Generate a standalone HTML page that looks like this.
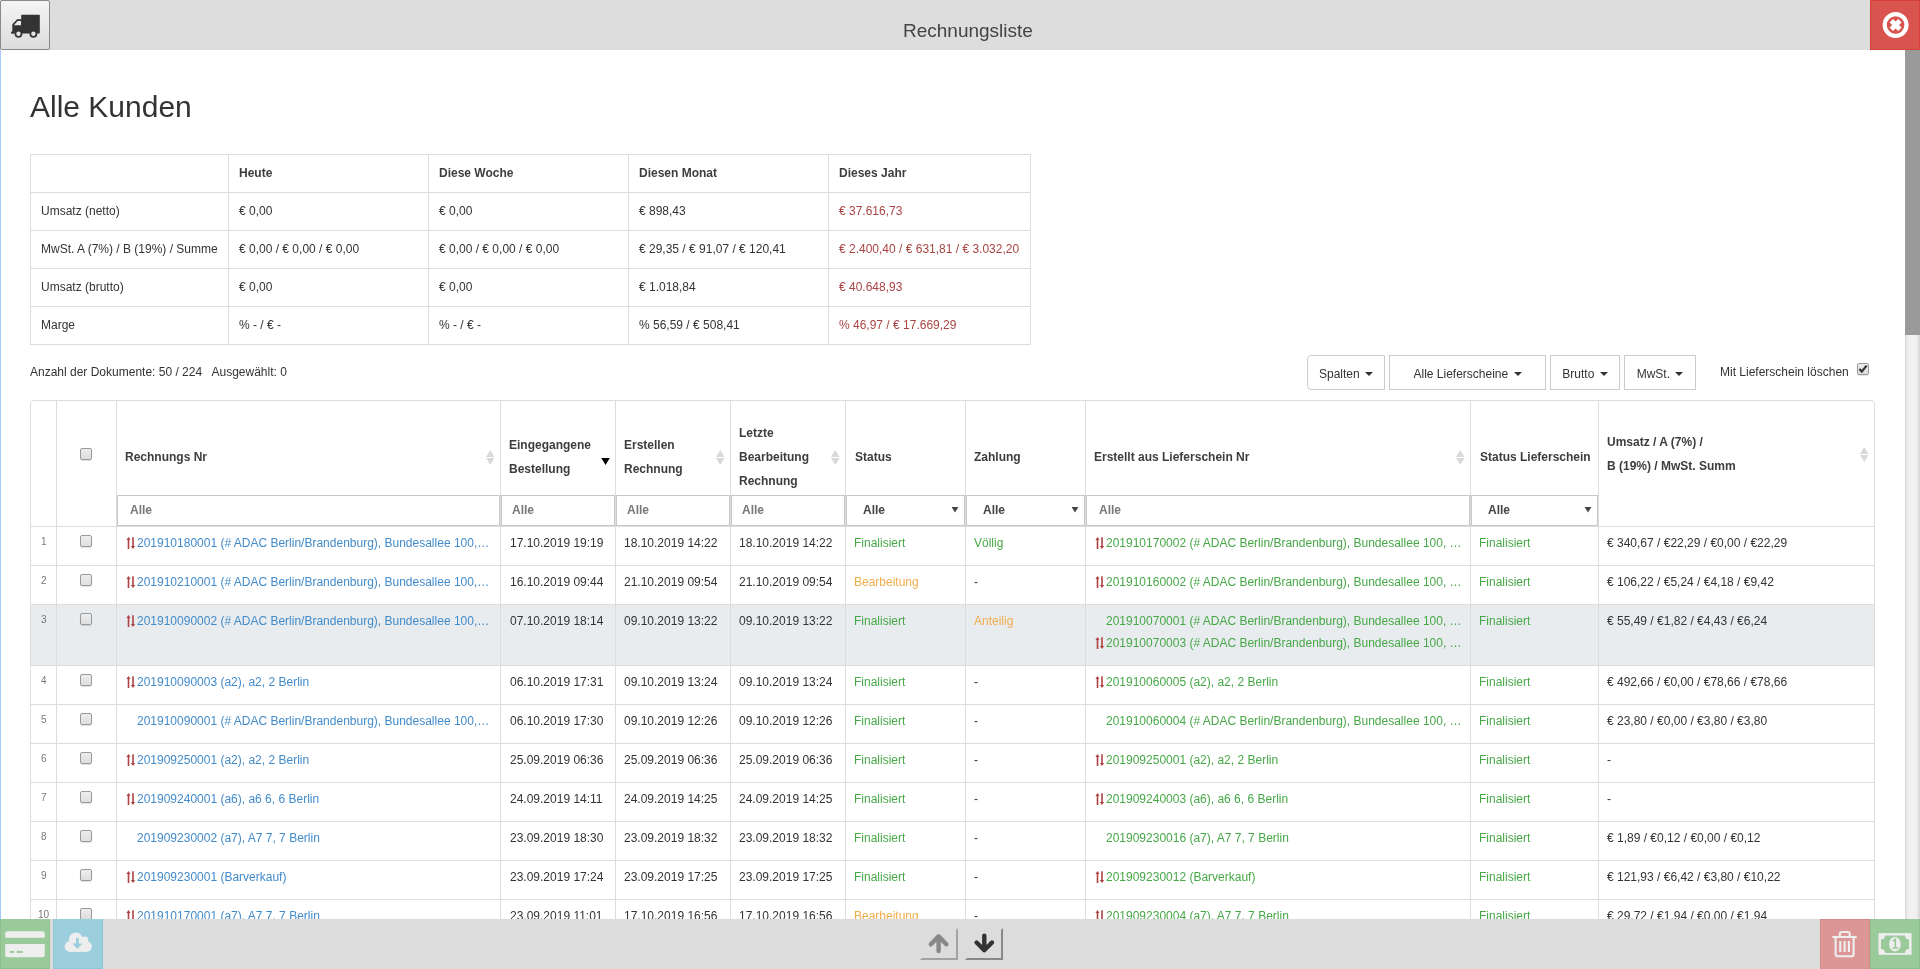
<!DOCTYPE html><html><head><meta charset="utf-8"><title>Rechnungsliste</title><style>
*{margin:0;padding:0;box-sizing:border-box}
html,body{width:1920px;height:969px;overflow:hidden;background:#fff}
#root{position:absolute;left:0;top:0;width:1920px;height:969px;will-change:transform}
body{-webkit-font-smoothing:antialiased;font-family:"Liberation Sans",sans-serif;font-size:12px;color:#333;position:relative}
.t{position:absolute;white-space:nowrap;line-height:14px}
.r{position:absolute}
.b{font-weight:bold;color:#3d3d3d}
.lk{color:#428bca}
.gr{color:#47a847}
.or{color:#f0ad4e}
.rd{color:#a94442}
.cb{position:absolute;width:12px;height:12px;border:1px solid #9a9a9a;border-radius:2px;background:linear-gradient(#ededed,#dedede);box-shadow:0 1px 1px rgba(0,0,0,.12)}
svg{position:absolute;overflow:visible}
</style></head><body><div id="root">
<div class="r" style="left:0px;top:0px;width:1920px;height:50px;background:#dddddd"></div>
<div class="r" style="left:0px;top:0px;width:50px;height:50px;background:linear-gradient(#f5f5f5,#dcdcdc);border:1px solid #8a8a8a;border-radius:2px"></div>
<svg style="left:0;top:0" width="50" height="50" viewBox="0 0 50 50">
<g fill="#333">
<rect x="21.2" y="14.8" width="18.6" height="18.6" rx="0.6"/>
<path d="M12.3 33.6 L12.3 24.2 L17.1 19.2 L22 19.2 L22 33.6 Z M13.9 25.3 L21.2 25.3 L21.2 20.9 L17.6 20.9 Z" fill-rule="evenodd"/>
<rect x="11" y="31.6" width="3" height="2.2" rx="1"/>
<circle cx="18.5" cy="33.8" r="3.9"/><circle cx="33.4" cy="33.8" r="3.9"/>
</g>
<circle cx="18.5" cy="33.8" r="2.2" fill="#e6e6e6"/><circle cx="33.4" cy="33.8" r="2.2" fill="#e6e6e6"/>
</svg>
<div class="t " style="left:903px;top:20px;font-size:19px;line-height:22px;color:#444">Rechnungsliste</div>
<div class="r" style="left:1870px;top:0px;width:50px;height:50px;background:#d9534f;border:1px solid #d43f3a"></div>
<svg style="left:1870px;top:0" width="50" height="50" viewBox="0 0 50 50">
<circle cx="25.6" cy="25" r="10.9" fill="none" stroke="#fff" stroke-width="4.2"/>
<path d="M25.60 28.39 L22.98 31.01 L19.59 27.62 L22.21 25.00 L19.59 22.38 L22.98 18.99 L25.60 21.61 L28.22 18.99 L31.61 22.38 L28.99 25.00 L31.61 27.62 L28.22 31.01 Z" fill="#fff"/>
</svg>
<div class="r" style="left:0px;top:50px;width:1px;height:869px;background:#a6c8ff"></div>
<div class="r" style="left:1905px;top:50px;width:15px;height:869px;background:linear-gradient(90deg,#d6d6d6 0,#e9e9e9 2px,#f1f1f1 5px,#f1f1f1 11px,#e0e0e0 14px,#d0d0d0 15px)"></div>
<div class="r" style="left:1905px;top:50px;width:15px;height:285px;background:#9a9a9a"></div>
<div class="t " style="left:30px;top:90px;font-size:30px;line-height:34px">Alle Kunden</div>
<div class="r" style="left:30px;top:154px;width:1px;height:191px;background:#dddddd"></div>
<div class="r" style="left:228px;top:154px;width:1px;height:191px;background:#dddddd"></div>
<div class="r" style="left:428px;top:154px;width:1px;height:191px;background:#dddddd"></div>
<div class="r" style="left:628px;top:154px;width:1px;height:191px;background:#dddddd"></div>
<div class="r" style="left:828px;top:154px;width:1px;height:191px;background:#dddddd"></div>
<div class="r" style="left:1030px;top:154px;width:1px;height:191px;background:#dddddd"></div>
<div class="r" style="left:30px;top:154px;width:1001px;height:1px;background:#dddddd"></div>
<div class="r" style="left:30px;top:192px;width:1001px;height:1px;background:#dddddd"></div>
<div class="r" style="left:30px;top:230px;width:1001px;height:1px;background:#dddddd"></div>
<div class="r" style="left:30px;top:268px;width:1001px;height:1px;background:#dddddd"></div>
<div class="r" style="left:30px;top:306px;width:1001px;height:1px;background:#dddddd"></div>
<div class="r" style="left:30px;top:344px;width:1001px;height:1px;background:#dddddd"></div>
<div class="t b" style="left:239px;top:166px;">Heute</div>
<div class="t b" style="left:439px;top:166px;">Diese Woche</div>
<div class="t b" style="left:639px;top:166px;">Diesen Monat</div>
<div class="t b" style="left:839px;top:166px;">Dieses Jahr</div>
<div class="t " style="left:41px;top:204px;">Umsatz (netto)</div>
<div class="t " style="left:239px;top:204px;">€ 0,00</div>
<div class="t " style="left:439px;top:204px;">€ 0,00</div>
<div class="t " style="left:639px;top:204px;">€ 898,43</div>
<div class="t rd" style="left:839px;top:204px;">€ 37.616,73</div>
<div class="t " style="left:41px;top:242px;">MwSt. A (7%) / B (19%) / Summe</div>
<div class="t " style="left:239px;top:242px;">€ 0,00 / € 0,00 / € 0,00</div>
<div class="t " style="left:439px;top:242px;">€ 0,00 / € 0,00 / € 0,00</div>
<div class="t " style="left:639px;top:242px;">€ 29,35 / € 91,07 / € 120,41</div>
<div class="t rd" style="left:839px;top:242px;">€ 2.400,40 / € 631,81 / € 3.032,20</div>
<div class="t " style="left:41px;top:280px;">Umsatz (brutto)</div>
<div class="t " style="left:239px;top:280px;">€ 0,00</div>
<div class="t " style="left:439px;top:280px;">€ 0,00</div>
<div class="t " style="left:639px;top:280px;">€ 1.018,84</div>
<div class="t rd" style="left:839px;top:280px;">€ 40.648,93</div>
<div class="t " style="left:41px;top:318px;">Marge</div>
<div class="t " style="left:239px;top:318px;">% - / € -</div>
<div class="t " style="left:439px;top:318px;">% - / € -</div>
<div class="t " style="left:639px;top:318px;">% 56,59 / € 508,41</div>
<div class="t rd" style="left:839px;top:318px;">% 46,97 / € 17.669,29</div>
<div class="t " style="left:30px;top:365px;">Anzahl der Dokumente: 50 / 224 &nbsp; Ausgewählt: 0</div>
<div class="r" style="left:1307px;top:355px;width:78px;height:35px;border:1px solid #cccccc;background:#fff;border-radius:4px 0 0 4px"></div>
<div class="t" style="left:1307px;top:367px;width:78px;text-align:center">Spalten <span style="display:inline-block;width:0;height:0;border-left:4px solid transparent;border-right:4px solid transparent;border-top:4px solid #333;vertical-align:middle;margin-left:2px;margin-top:-2px"></span></div>
<div class="r" style="left:1389px;top:355px;width:157px;height:35px;border:1px solid #cccccc;background:#fff;"></div>
<div class="t" style="left:1389px;top:367px;width:157px;text-align:center">Alle Lieferscheine <span style="display:inline-block;width:0;height:0;border-left:4px solid transparent;border-right:4px solid transparent;border-top:4px solid #333;vertical-align:middle;margin-left:2px;margin-top:-2px"></span></div>
<div class="r" style="left:1550px;top:355px;width:70px;height:35px;border:1px solid #cccccc;background:#fff;"></div>
<div class="t" style="left:1550px;top:367px;width:70px;text-align:center">Brutto <span style="display:inline-block;width:0;height:0;border-left:4px solid transparent;border-right:4px solid transparent;border-top:4px solid #333;vertical-align:middle;margin-left:2px;margin-top:-2px"></span></div>
<div class="r" style="left:1624px;top:355px;width:72px;height:35px;border:1px solid #cccccc;background:#fff;"></div>
<div class="t" style="left:1624px;top:367px;width:72px;text-align:center">MwSt. <span style="display:inline-block;width:0;height:0;border-left:4px solid transparent;border-right:4px solid transparent;border-top:4px solid #333;vertical-align:middle;margin-left:2px;margin-top:-2px"></span></div>
<div class="t " style="left:1720px;top:365px;">Mit Lieferschein löschen</div>
<div class="cb" style="left:1857px;top:363px"></div>
<svg style="left:1857px;top:363px" width="12" height="12" viewBox="0 0 12 12"><path d="M2.4 6 L4.8 8.6 L9.6 2.6" fill="none" stroke="#333" stroke-width="2.3"/></svg>
<div class="r" style="left:31px;top:605px;width:1843px;height:60px;background:#e9ecef"></div>
<div class="r" style="left:30px;top:400px;width:1845px;height:579px;border:1px solid #dddddd;border-radius:4px 4px 0 0"></div>
<div class="r" style="left:56px;top:400px;width:1px;height:569px;background:#dddddd"></div>
<div class="r" style="left:116px;top:400px;width:1px;height:569px;background:#dddddd"></div>
<div class="r" style="left:500px;top:400px;width:1px;height:569px;background:#dddddd"></div>
<div class="r" style="left:615px;top:400px;width:1px;height:569px;background:#dddddd"></div>
<div class="r" style="left:730px;top:400px;width:1px;height:569px;background:#dddddd"></div>
<div class="r" style="left:845px;top:400px;width:1px;height:569px;background:#dddddd"></div>
<div class="r" style="left:965px;top:400px;width:1px;height:569px;background:#dddddd"></div>
<div class="r" style="left:1085px;top:400px;width:1px;height:569px;background:#dddddd"></div>
<div class="r" style="left:1470px;top:400px;width:1px;height:569px;background:#dddddd"></div>
<div class="r" style="left:1598px;top:400px;width:1px;height:569px;background:#dddddd"></div>
<div class="r" style="left:30px;top:526px;width:1845px;height:1px;background:#dddddd"></div>
<div class="r" style="left:30px;top:565px;width:1845px;height:1px;background:#dddddd"></div>
<div class="r" style="left:30px;top:604px;width:1845px;height:1px;background:#dddddd"></div>
<div class="r" style="left:30px;top:665px;width:1845px;height:1px;background:#dddddd"></div>
<div class="r" style="left:30px;top:704px;width:1845px;height:1px;background:#dddddd"></div>
<div class="r" style="left:30px;top:743px;width:1845px;height:1px;background:#dddddd"></div>
<div class="r" style="left:30px;top:782px;width:1845px;height:1px;background:#dddddd"></div>
<div class="r" style="left:30px;top:821px;width:1845px;height:1px;background:#dddddd"></div>
<div class="r" style="left:30px;top:860px;width:1845px;height:1px;background:#dddddd"></div>
<div class="r" style="left:30px;top:899px;width:1845px;height:1px;background:#dddddd"></div>
<div class="r" style="left:30px;top:938px;width:1845px;height:1px;background:#dddddd"></div>
<div class="r" style="left:116px;top:495px;width:1482px;height:1px;background:#dddddd"></div>
<div class="t b" style="left:125px;top:450px;">Rechnungs Nr</div>
<div class="t b" style="left:509px;top:438px;">Eingegangene</div>
<div class="t b" style="left:509px;top:462px;">Bestellung</div>
<div class="t b" style="left:624px;top:438px;">Erstellen</div>
<div class="t b" style="left:624px;top:462px;">Rechnung</div>
<div class="t b" style="left:739px;top:426px;">Letzte</div>
<div class="t b" style="left:739px;top:450px;">Bearbeitung</div>
<div class="t b" style="left:739px;top:474px;">Rechnung</div>
<div class="t b" style="left:855px;top:450px;">Status</div>
<div class="t b" style="left:974px;top:450px;">Zahlung</div>
<div class="t b" style="left:1094px;top:450px;">Erstellt aus Lieferschein Nr</div>
<div class="t b" style="left:1480px;top:450px;">Status Lieferschein</div>
<div class="t b" style="left:1607px;top:435px;">Umsatz / A (7%) /</div>
<div class="t b" style="left:1607px;top:459px;">B (19%) / MwSt. Summ</div>
<div class="cb" style="left:80px;top:448px"></div>
<svg style="left:486.25px;top:450px" width="9" height="15" viewBox="0 0 9 15"><path d="M4.25 0 L8.5 7 L0 7 Z M0 8 L8.5 8 L4.25 15 Z" fill="#d9d9d9"/></svg>
<svg style="left:716.25px;top:450px" width="9" height="15" viewBox="0 0 9 15"><path d="M4.25 0 L8.5 7 L0 7 Z M0 8 L8.5 8 L4.25 15 Z" fill="#d9d9d9"/></svg>
<svg style="left:831.25px;top:450px" width="9" height="15" viewBox="0 0 9 15"><path d="M4.25 0 L8.5 7 L0 7 Z M0 8 L8.5 8 L4.25 15 Z" fill="#d9d9d9"/></svg>
<svg style="left:1456.25px;top:450px" width="9" height="15" viewBox="0 0 9 15"><path d="M4.25 0 L8.5 7 L0 7 Z M0 8 L8.5 8 L4.25 15 Z" fill="#d9d9d9"/></svg>
<svg style="left:1860.25px;top:447px" width="9" height="15" viewBox="0 0 9 15"><path d="M4.25 0 L8.5 7 L0 7 Z M0 8 L8.5 8 L4.25 15 Z" fill="#d9d9d9"/></svg>
<svg style="left:600px;top:457px" width="11" height="10" viewBox="0 0 11 10"><path d="M1.3 1 L9.8 1 L5.55 8 Z" fill="#000"/></svg>
<div class="r" style="left:117px;top:495px;width:383px;height:31px;border:1px solid #c8c8c8;background:#fff"></div>
<div class="t b" style="left:130px;top:503px;color:#777">Alle</div>
<div class="r" style="left:501px;top:495px;width:114px;height:31px;border:1px solid #c8c8c8;background:#fff"></div>
<div class="t b" style="left:512px;top:503px;color:#777">Alle</div>
<div class="r" style="left:616px;top:495px;width:114px;height:31px;border:1px solid #c8c8c8;background:#fff"></div>
<div class="t b" style="left:627px;top:503px;color:#777">Alle</div>
<div class="r" style="left:731px;top:495px;width:114px;height:31px;border:1px solid #c8c8c8;background:#fff"></div>
<div class="t b" style="left:742px;top:503px;color:#777">Alle</div>
<div class="r" style="left:846px;top:495px;width:119px;height:31px;border:1px solid #c8c8c8;background:#fff"></div>
<div class="t b" style="left:863px;top:503px;color:#444">Alle</div>
<svg style="left:951px;top:507px" width="8" height="7" viewBox="0 0 8 7"><path d="M0.6 0 L7.4 0 L4 5.6 Z" fill="#444"/></svg>
<div class="r" style="left:966px;top:495px;width:119px;height:31px;border:1px solid #c8c8c8;background:#fff"></div>
<div class="t b" style="left:983px;top:503px;color:#444">Alle</div>
<svg style="left:1071px;top:507px" width="8" height="7" viewBox="0 0 8 7"><path d="M0.6 0 L7.4 0 L4 5.6 Z" fill="#444"/></svg>
<div class="r" style="left:1086px;top:495px;width:384px;height:31px;border:1px solid #c8c8c8;background:#fff"></div>
<div class="t b" style="left:1099px;top:503px;color:#777">Alle</div>
<div class="r" style="left:1471px;top:495px;width:127px;height:31px;border:1px solid #c8c8c8;background:#fff"></div>
<div class="t b" style="left:1488px;top:503px;color:#444">Alle</div>
<svg style="left:1584px;top:507px" width="8" height="7" viewBox="0 0 8 7"><path d="M0.6 0 L7.4 0 L4 5.6 Z" fill="#444"/></svg>
<div class="t " style="left:41px;top:535px;font-size:10px;color:#777">1</div>
<div class="cb" style="left:80px;top:535px"></div>
<svg style="left:126px;top:537px" width="10" height="13" viewBox="0 0 10 13"><g fill="#ad4444"><path d="M2.5 0.1 L4.6 3.0 L3.3 3.0 L3.3 12 L1.7 12 L1.7 3.0 L0.4 3.0 Z"/><path d="M7 12 L9.2 9 L7.8 9 L7.8 0.3 L6.2 0.3 L6.2 9 L4.8 9 Z"/></g></svg>
<div class="t lk" style="left:137px;top:536px;">201910180001 (# ADAC Berlin/Brandenburg), Bundesallee 100,…</div>
<div class="t " style="left:510px;top:536px;">17.10.2019 19:19</div>
<div class="t " style="left:624px;top:536px;">18.10.2019 14:22</div>
<div class="t " style="left:739px;top:536px;">18.10.2019 14:22</div>
<div class="t gr" style="left:854px;top:536px;">Finalisiert</div>
<div class="t gr" style="left:974px;top:536px;">Völlig</div>
<svg style="left:1095px;top:537px" width="10" height="13" viewBox="0 0 10 13"><g fill="#ad4444"><path d="M2.5 0.1 L4.6 3.0 L3.3 3.0 L3.3 12 L1.7 12 L1.7 3.0 L0.4 3.0 Z"/><path d="M7 12 L9.2 9 L7.8 9 L7.8 0.3 L6.2 0.3 L6.2 9 L4.8 9 Z"/></g></svg>
<div class="t gr" style="left:1106px;top:536px;">201910170002 (# ADAC Berlin/Brandenburg), Bundesallee 100, …</div>
<div class="t gr" style="left:1479px;top:536px;">Finalisiert</div>
<div class="t " style="left:1607px;top:536px;">€ 340,67 / €22,29 / €0,00 / €22,29</div>
<div class="t " style="left:41px;top:574px;font-size:10px;color:#777">2</div>
<div class="cb" style="left:80px;top:574px"></div>
<svg style="left:126px;top:576px" width="10" height="13" viewBox="0 0 10 13"><g fill="#ad4444"><path d="M2.5 0.1 L4.6 3.0 L3.3 3.0 L3.3 12 L1.7 12 L1.7 3.0 L0.4 3.0 Z"/><path d="M7 12 L9.2 9 L7.8 9 L7.8 0.3 L6.2 0.3 L6.2 9 L4.8 9 Z"/></g></svg>
<div class="t lk" style="left:137px;top:575px;">201910210001 (# ADAC Berlin/Brandenburg), Bundesallee 100,…</div>
<div class="t " style="left:510px;top:575px;">16.10.2019 09:44</div>
<div class="t " style="left:624px;top:575px;">21.10.2019 09:54</div>
<div class="t " style="left:739px;top:575px;">21.10.2019 09:54</div>
<div class="t or" style="left:854px;top:575px;">Bearbeitung</div>
<div class="t " style="left:974px;top:575px;">-</div>
<svg style="left:1095px;top:576px" width="10" height="13" viewBox="0 0 10 13"><g fill="#ad4444"><path d="M2.5 0.1 L4.6 3.0 L3.3 3.0 L3.3 12 L1.7 12 L1.7 3.0 L0.4 3.0 Z"/><path d="M7 12 L9.2 9 L7.8 9 L7.8 0.3 L6.2 0.3 L6.2 9 L4.8 9 Z"/></g></svg>
<div class="t gr" style="left:1106px;top:575px;">201910160002 (# ADAC Berlin/Brandenburg), Bundesallee 100, …</div>
<div class="t gr" style="left:1479px;top:575px;">Finalisiert</div>
<div class="t " style="left:1607px;top:575px;">€ 106,22 / €5,24 / €4,18 / €9,42</div>
<div class="t " style="left:41px;top:613px;font-size:10px;color:#777">3</div>
<div class="cb" style="left:80px;top:613px"></div>
<svg style="left:126px;top:615px" width="10" height="13" viewBox="0 0 10 13"><g fill="#ad4444"><path d="M2.5 0.1 L4.6 3.0 L3.3 3.0 L3.3 12 L1.7 12 L1.7 3.0 L0.4 3.0 Z"/><path d="M7 12 L9.2 9 L7.8 9 L7.8 0.3 L6.2 0.3 L6.2 9 L4.8 9 Z"/></g></svg>
<div class="t lk" style="left:137px;top:614px;">201910090002 (# ADAC Berlin/Brandenburg), Bundesallee 100,…</div>
<div class="t " style="left:510px;top:614px;">07.10.2019 18:14</div>
<div class="t " style="left:624px;top:614px;">09.10.2019 13:22</div>
<div class="t " style="left:739px;top:614px;">09.10.2019 13:22</div>
<div class="t gr" style="left:854px;top:614px;">Finalisiert</div>
<div class="t or" style="left:974px;top:614px;">Anteilig</div>
<div class="t gr" style="left:1106px;top:614px;">201910070001 (# ADAC Berlin/Brandenburg), Bundesallee 100, …</div>
<svg style="left:1095px;top:637px" width="10" height="13" viewBox="0 0 10 13"><g fill="#ad4444"><path d="M2.5 0.1 L4.6 3.0 L3.3 3.0 L3.3 12 L1.7 12 L1.7 3.0 L0.4 3.0 Z"/><path d="M7 12 L9.2 9 L7.8 9 L7.8 0.3 L6.2 0.3 L6.2 9 L4.8 9 Z"/></g></svg>
<div class="t gr" style="left:1106px;top:636px;">201910070003 (# ADAC Berlin/Brandenburg), Bundesallee 100, …</div>
<div class="t gr" style="left:1479px;top:614px;">Finalisiert</div>
<div class="t " style="left:1607px;top:614px;">€ 55,49 / €1,82 / €4,43 / €6,24</div>
<div class="t " style="left:41px;top:674px;font-size:10px;color:#777">4</div>
<div class="cb" style="left:80px;top:674px"></div>
<svg style="left:126px;top:676px" width="10" height="13" viewBox="0 0 10 13"><g fill="#ad4444"><path d="M2.5 0.1 L4.6 3.0 L3.3 3.0 L3.3 12 L1.7 12 L1.7 3.0 L0.4 3.0 Z"/><path d="M7 12 L9.2 9 L7.8 9 L7.8 0.3 L6.2 0.3 L6.2 9 L4.8 9 Z"/></g></svg>
<div class="t lk" style="left:137px;top:675px;">201910090003 (a2), a2, 2 Berlin</div>
<div class="t " style="left:510px;top:675px;">06.10.2019 17:31</div>
<div class="t " style="left:624px;top:675px;">09.10.2019 13:24</div>
<div class="t " style="left:739px;top:675px;">09.10.2019 13:24</div>
<div class="t gr" style="left:854px;top:675px;">Finalisiert</div>
<div class="t " style="left:974px;top:675px;">-</div>
<svg style="left:1095px;top:676px" width="10" height="13" viewBox="0 0 10 13"><g fill="#ad4444"><path d="M2.5 0.1 L4.6 3.0 L3.3 3.0 L3.3 12 L1.7 12 L1.7 3.0 L0.4 3.0 Z"/><path d="M7 12 L9.2 9 L7.8 9 L7.8 0.3 L6.2 0.3 L6.2 9 L4.8 9 Z"/></g></svg>
<div class="t gr" style="left:1106px;top:675px;">201910060005 (a2), a2, 2 Berlin</div>
<div class="t gr" style="left:1479px;top:675px;">Finalisiert</div>
<div class="t " style="left:1607px;top:675px;">€ 492,66 / €0,00 / €78,66 / €78,66</div>
<div class="t " style="left:41px;top:713px;font-size:10px;color:#777">5</div>
<div class="cb" style="left:80px;top:713px"></div>
<div class="t lk" style="left:137px;top:714px;">201910090001 (# ADAC Berlin/Brandenburg), Bundesallee 100,…</div>
<div class="t " style="left:510px;top:714px;">06.10.2019 17:30</div>
<div class="t " style="left:624px;top:714px;">09.10.2019 12:26</div>
<div class="t " style="left:739px;top:714px;">09.10.2019 12:26</div>
<div class="t gr" style="left:854px;top:714px;">Finalisiert</div>
<div class="t " style="left:974px;top:714px;">-</div>
<div class="t gr" style="left:1106px;top:714px;">201910060004 (# ADAC Berlin/Brandenburg), Bundesallee 100, …</div>
<div class="t gr" style="left:1479px;top:714px;">Finalisiert</div>
<div class="t " style="left:1607px;top:714px;">€ 23,80 / €0,00 / €3,80 / €3,80</div>
<div class="t " style="left:41px;top:752px;font-size:10px;color:#777">6</div>
<div class="cb" style="left:80px;top:752px"></div>
<svg style="left:126px;top:754px" width="10" height="13" viewBox="0 0 10 13"><g fill="#ad4444"><path d="M2.5 0.1 L4.6 3.0 L3.3 3.0 L3.3 12 L1.7 12 L1.7 3.0 L0.4 3.0 Z"/><path d="M7 12 L9.2 9 L7.8 9 L7.8 0.3 L6.2 0.3 L6.2 9 L4.8 9 Z"/></g></svg>
<div class="t lk" style="left:137px;top:753px;">201909250001 (a2), a2, 2 Berlin</div>
<div class="t " style="left:510px;top:753px;">25.09.2019 06:36</div>
<div class="t " style="left:624px;top:753px;">25.09.2019 06:36</div>
<div class="t " style="left:739px;top:753px;">25.09.2019 06:36</div>
<div class="t gr" style="left:854px;top:753px;">Finalisiert</div>
<div class="t " style="left:974px;top:753px;">-</div>
<svg style="left:1095px;top:754px" width="10" height="13" viewBox="0 0 10 13"><g fill="#ad4444"><path d="M2.5 0.1 L4.6 3.0 L3.3 3.0 L3.3 12 L1.7 12 L1.7 3.0 L0.4 3.0 Z"/><path d="M7 12 L9.2 9 L7.8 9 L7.8 0.3 L6.2 0.3 L6.2 9 L4.8 9 Z"/></g></svg>
<div class="t gr" style="left:1106px;top:753px;">201909250001 (a2), a2, 2 Berlin</div>
<div class="t gr" style="left:1479px;top:753px;">Finalisiert</div>
<div class="t " style="left:1607px;top:753px;">-</div>
<div class="t " style="left:41px;top:791px;font-size:10px;color:#777">7</div>
<div class="cb" style="left:80px;top:791px"></div>
<svg style="left:126px;top:793px" width="10" height="13" viewBox="0 0 10 13"><g fill="#ad4444"><path d="M2.5 0.1 L4.6 3.0 L3.3 3.0 L3.3 12 L1.7 12 L1.7 3.0 L0.4 3.0 Z"/><path d="M7 12 L9.2 9 L7.8 9 L7.8 0.3 L6.2 0.3 L6.2 9 L4.8 9 Z"/></g></svg>
<div class="t lk" style="left:137px;top:792px;">201909240001 (a6), a6 6, 6 Berlin</div>
<div class="t " style="left:510px;top:792px;">24.09.2019 14:11</div>
<div class="t " style="left:624px;top:792px;">24.09.2019 14:25</div>
<div class="t " style="left:739px;top:792px;">24.09.2019 14:25</div>
<div class="t gr" style="left:854px;top:792px;">Finalisiert</div>
<div class="t " style="left:974px;top:792px;">-</div>
<svg style="left:1095px;top:793px" width="10" height="13" viewBox="0 0 10 13"><g fill="#ad4444"><path d="M2.5 0.1 L4.6 3.0 L3.3 3.0 L3.3 12 L1.7 12 L1.7 3.0 L0.4 3.0 Z"/><path d="M7 12 L9.2 9 L7.8 9 L7.8 0.3 L6.2 0.3 L6.2 9 L4.8 9 Z"/></g></svg>
<div class="t gr" style="left:1106px;top:792px;">201909240003 (a6), a6 6, 6 Berlin</div>
<div class="t gr" style="left:1479px;top:792px;">Finalisiert</div>
<div class="t " style="left:1607px;top:792px;">-</div>
<div class="t " style="left:41px;top:830px;font-size:10px;color:#777">8</div>
<div class="cb" style="left:80px;top:830px"></div>
<div class="t lk" style="left:137px;top:831px;">201909230002 (a7), A7 7, 7 Berlin</div>
<div class="t " style="left:510px;top:831px;">23.09.2019 18:30</div>
<div class="t " style="left:624px;top:831px;">23.09.2019 18:32</div>
<div class="t " style="left:739px;top:831px;">23.09.2019 18:32</div>
<div class="t gr" style="left:854px;top:831px;">Finalisiert</div>
<div class="t " style="left:974px;top:831px;">-</div>
<div class="t gr" style="left:1106px;top:831px;">201909230016 (a7), A7 7, 7 Berlin</div>
<div class="t gr" style="left:1479px;top:831px;">Finalisiert</div>
<div class="t " style="left:1607px;top:831px;">€ 1,89 / €0,12 / €0,00 / €0,12</div>
<div class="t " style="left:41px;top:869px;font-size:10px;color:#777">9</div>
<div class="cb" style="left:80px;top:869px"></div>
<svg style="left:126px;top:871px" width="10" height="13" viewBox="0 0 10 13"><g fill="#ad4444"><path d="M2.5 0.1 L4.6 3.0 L3.3 3.0 L3.3 12 L1.7 12 L1.7 3.0 L0.4 3.0 Z"/><path d="M7 12 L9.2 9 L7.8 9 L7.8 0.3 L6.2 0.3 L6.2 9 L4.8 9 Z"/></g></svg>
<div class="t lk" style="left:137px;top:870px;">201909230001 (Barverkauf)</div>
<div class="t " style="left:510px;top:870px;">23.09.2019 17:24</div>
<div class="t " style="left:624px;top:870px;">23.09.2019 17:25</div>
<div class="t " style="left:739px;top:870px;">23.09.2019 17:25</div>
<div class="t gr" style="left:854px;top:870px;">Finalisiert</div>
<div class="t " style="left:974px;top:870px;">-</div>
<svg style="left:1095px;top:871px" width="10" height="13" viewBox="0 0 10 13"><g fill="#ad4444"><path d="M2.5 0.1 L4.6 3.0 L3.3 3.0 L3.3 12 L1.7 12 L1.7 3.0 L0.4 3.0 Z"/><path d="M7 12 L9.2 9 L7.8 9 L7.8 0.3 L6.2 0.3 L6.2 9 L4.8 9 Z"/></g></svg>
<div class="t gr" style="left:1106px;top:870px;">201909230012 (Barverkauf)</div>
<div class="t gr" style="left:1479px;top:870px;">Finalisiert</div>
<div class="t " style="left:1607px;top:870px;">€ 121,93 / €6,42 / €3,80 / €10,22</div>
<div class="t " style="left:38px;top:908px;font-size:10px;color:#777">10</div>
<div class="cb" style="left:80px;top:908px"></div>
<svg style="left:126px;top:910px" width="10" height="13" viewBox="0 0 10 13"><g fill="#ad4444"><path d="M2.5 0.1 L4.6 3.0 L3.3 3.0 L3.3 12 L1.7 12 L1.7 3.0 L0.4 3.0 Z"/><path d="M7 12 L9.2 9 L7.8 9 L7.8 0.3 L6.2 0.3 L6.2 9 L4.8 9 Z"/></g></svg>
<div class="t lk" style="left:137px;top:909px;">201910170001 (a7), A7 7, 7 Berlin</div>
<div class="t " style="left:510px;top:909px;">23.09.2019 11:01</div>
<div class="t " style="left:624px;top:909px;">17.10.2019 16:56</div>
<div class="t " style="left:739px;top:909px;">17.10.2019 16:56</div>
<div class="t or" style="left:854px;top:909px;">Bearbeitung</div>
<div class="t " style="left:974px;top:909px;">-</div>
<svg style="left:1095px;top:910px" width="10" height="13" viewBox="0 0 10 13"><g fill="#ad4444"><path d="M2.5 0.1 L4.6 3.0 L3.3 3.0 L3.3 12 L1.7 12 L1.7 3.0 L0.4 3.0 Z"/><path d="M7 12 L9.2 9 L7.8 9 L7.8 0.3 L6.2 0.3 L6.2 9 L4.8 9 Z"/></g></svg>
<div class="t gr" style="left:1106px;top:909px;">201909230004 (a7), A7 7, 7 Berlin</div>
<div class="t gr" style="left:1479px;top:909px;">Finalisiert</div>
<div class="t " style="left:1607px;top:909px;">€ 29,72 / €1,94 / €0,00 / €1,94</div>
<div class="r" style="left:0px;top:919px;width:1920px;height:50px;background:#dcdcdc"></div>
<div class="r" style="left:0px;top:919px;width:50px;height:50px;background:#9ac99a;border:1px solid #8fc18f;border-top:none"></div>
<div class="r" style="left:53px;top:919px;width:50px;height:50px;background:#9ccfdd;border:1px solid #8fc7d8;border-top:none"></div>
<div class="r" style="left:1820px;top:919px;width:50px;height:50px;background:#dc9695;border:1px solid #d58a89;border-bottom:none"></div>
<div class="r" style="left:1870px;top:919px;width:50px;height:50px;background:#9ac99a;border:1px solid #8fc18f;border-top:none"></div>
<svg style="left:0;top:919px" width="50" height="50" viewBox="0 0 50 50">
<path d="M5.2 18.8 L5.2 14.6 Q5.2 12.2 7.6 12.2 L42.4 12.2 Q44.8 12.2 44.8 14.6 L44.8 18.8 Z" fill="#eeeeee"/>
<path d="M5.2 25 L44.8 25 L44.8 35.9 Q44.8 38.3 42.4 38.3 L7.6 38.3 Q5.2 38.3 5.2 35.9 Z" fill="#eeeeee"/>
<rect x="10" y="31.9" width="4.2" height="2" fill="#9ac99a"/><rect x="16.7" y="31.9" width="6.1" height="2" fill="#9ac99a"/>
</svg>
<svg style="left:53px;top:919px" width="50" height="50" viewBox="0 0 50 50">
<g fill="#eeeeee">
<circle cx="22.8" cy="20.4" r="6.8"/><circle cx="31.9" cy="20.9" r="3.3"/>
<circle cx="17.2" cy="27.4" r="5.5"/><circle cx="33.6" cy="27.6" r="5.3"/>
<rect x="17.2" y="21" width="16.4" height="11.9"/>
</g>
<path d="M23 19 L25.8 19 L25.8 24.5 L29.4 24.5 L24.4 30.1 L19.4 24.5 L23 24.5 Z" fill="#9ccfdd"/>
</svg>
<div class="r" style="left:920px;top:928px;width:38px;height:32px;border:2px solid transparent;border-right-color:#a3a3a3;border-bottom-color:#a3a3a3"></div>
<div class="r" style="left:965px;top:928px;width:38px;height:32px;border:2px solid transparent;border-right-color:#888;border-bottom-color:#888"></div>
<svg style="left:920px;top:928px" width="40" height="32" viewBox="0 0 40 32">
<path d="M18.6 23 L18.6 9 M10.9 16.3 L18.6 8.4 L26.3 16.3" fill="none" stroke="#888" stroke-width="4.4" stroke-linecap="round" stroke-linejoin="round"/>
</svg>
<svg style="left:965px;top:928px" width="40" height="32" viewBox="0 0 40 32">
<path d="M19.3 7.6 L19.3 21 M11.6 14.5 L19.3 22.2 L27 14.5" fill="none" stroke="#333" stroke-width="4.4" stroke-linecap="round" stroke-linejoin="round"/>
</svg>
<svg style="left:1820px;top:919px" width="50" height="50" viewBox="0 0 50 50">
<g fill="none" stroke="#eeeeee" stroke-width="2.1">
<path d="M12.3 18 L36.7 18"/>
<path d="M19.9 17.5 L19.9 15 Q19.9 13 21.9 13 L27.7 13 Q29.7 13 29.7 15 L29.7 17.5"/>
<path d="M15.6 18 L15.6 35 Q15.6 37.3 17.9 37.3 L31.3 37.3 Q33.6 37.3 33.6 35 L33.6 18"/>
</g>
<g fill="#eeeeee"><rect x="19.2" y="22" width="2.2" height="11"/><rect x="23.5" y="22" width="2.2" height="11"/><rect x="27.8" y="22" width="2.2" height="11"/></g>
</svg>
<svg style="left:1870px;top:919px" width="50" height="50" viewBox="0 0 50 50">
<rect x="8.5" y="14.1" width="33.1" height="21.7" fill="#eeeeee"/>
<path d="M15 16.6 L35 16.6 A4 4 0 0 0 39 20.6 L39 30 A4 4 0 0 0 35 34 L15 34 A4 4 0 0 0 11 30 L11 20.6 A4 4 0 0 0 15 16.6 Z" fill="#9ac99a"/>
<ellipse cx="24.9" cy="25.2" rx="5.9" ry="7.2" fill="#eeeeee"/>
<path d="M22.8 22 L25.3 20.4 L25.3 28.6 M22.6 29 L28.2 29" fill="none" stroke="#9ac99a" stroke-width="1.6"/>
</svg>
</div></body></html>
